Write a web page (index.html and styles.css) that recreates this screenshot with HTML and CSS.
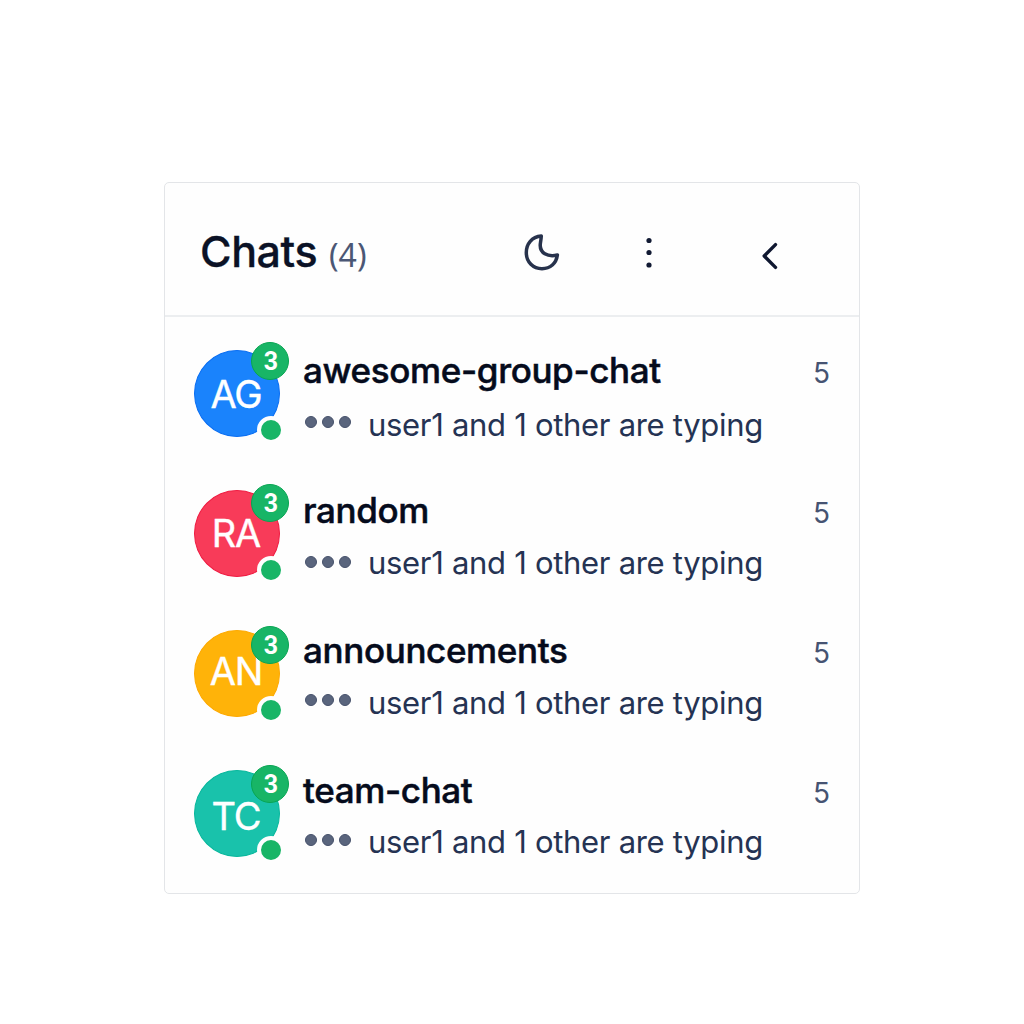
FILE: index.html
```html
<!DOCTYPE html>
<html lang="en">
<head>
<meta charset="utf-8">
<title>Chats</title>
<link rel="stylesheet" href="styles.css">
</head>
<body>
<main class="panel">
  <header class="header">
    <h1 class="title">Chats</h1>
    <span class="total">(4)</span>
    <svg class="icon moon" width="40" height="42" viewBox="0 0 40 42"><path d="M19.300 4C9.800 4.800 4.300 11.800 4.300 20.600C4.300 30.300 11.300 36.700 20 36.700C28.300 36.700 34.200 31.500 35.400 23C26.500 25 16.500 22 18.500 10.500C18.900 8 19.200 6 19.300 4Z"/></svg>
    <svg class="icon dots" width="10" height="36" viewBox="0 0 10 36"><circle cx="5" cy="5.500" r="2.600"/><circle cx="5" cy="17.500" r="2.600"/><circle cx="5" cy="30" r="2.600"/></svg>
    <svg class="icon back" width="20" height="32" viewBox="0 0 20 32"><path d="M15.500 4.600L4.200 16L15.500 27.400"/></svg>
  </header>
  <ul class="list">
    <li class="chat chat-ag">
      <div class="avatar"><span class="initials">AG</span><span class="badge">3</span><span class="online"></span></div>
      <div class="body"><h2 class="name">awesome-group-chat</h2><p class="status"><span class="typing"><i></i><i></i><i></i></span><span class="text">user1 and 1 other are typing</span></p></div>
      <span class="count">5</span>
    </li>
    <li class="chat chat-ra">
      <div class="avatar"><span class="initials">RA</span><span class="badge">3</span><span class="online"></span></div>
      <div class="body"><h2 class="name">random</h2><p class="status"><span class="typing"><i></i><i></i><i></i></span><span class="text">user1 and 1 other are typing</span></p></div>
      <span class="count">5</span>
    </li>
    <li class="chat chat-an">
      <div class="avatar"><span class="initials">AN</span><span class="badge">3</span><span class="online"></span></div>
      <div class="body"><h2 class="name">announcements</h2><p class="status"><span class="typing"><i></i><i></i><i></i></span><span class="text">user1 and 1 other are typing</span></p></div>
      <span class="count">5</span>
    </li>
    <li class="chat chat-tc">
      <div class="avatar"><span class="initials">TC</span><span class="badge">3</span><span class="online"></span></div>
      <div class="body"><h2 class="name">team-chat</h2><p class="status"><span class="typing"><i></i><i></i><i></i></span><span class="text">user1 and 1 other are typing</span></p></div>
      <span class="count">5</span>
    </li>
  </ul>
</main>
</body>
</html>
```
FILE: styles.css
```css
* { box-sizing: border-box; margin: 0; padding: 0; }
body { background: #fff; font-family: Inter, "Liberation Sans", sans-serif; }
.panel {
  width: 696px;
  height: 712px;
  margin: 182px 0 0 164px;
  border: 1px solid #e3e5e8;
  border-radius: 5px;
  background: #fefefe;
}
.header {
  display: flex;
  align-items: flex-start;
  height: 134px;
  padding-left: 35px;
  border-bottom: 2px solid #eceef0;
}
.title {
  width: 118px;
  margin-top: 41px;
  font-size: 43px;
  font-weight: 500;
  -webkit-text-stroke: 0.3px #0b1226;
  line-height: 54px;
  letter-spacing: -0.4px;
  color: #0b1226;
  white-space: nowrap;
}
.total {
  width: 50px;
  margin: 47px 0 0 11px;
  font-family: "Noto Sans", sans-serif;
  font-size: 32px;
  line-height: 50px;
  color: #4b5775;
}
.icon { flex: none; fill: none; stroke-linecap: round; stroke-linejoin: round; }
.moon { margin: 49px 0 0 143px; stroke: #27324c; stroke-width: 3.5; }
.dots { margin: 52px 0 0 82px; fill: #111a33; }
.back { margin: 57px 0 0 106px; stroke: #0f1730; stroke-width: 3.4; }
.list { padding-top: 33px; list-style: none; }
.chat { display: flex; align-items: flex-start; height: 140px; padding: 0 29px; }
.avatar {
  position: relative;
  flex: none;
  width: 86px;
  height: 87px;
  border: 1px solid var(--edge);
  border-radius: 50%;
  background: var(--fill);
  color: #fff;
  text-align: center;
}
.initials {
  display: block;
  padding: var(--initials-top) 2px 0 0;
  font-size: 38px;
  -webkit-text-stroke: 0.4px #fff;
  line-height: 44px;
  letter-spacing: -1.2px;
}
.badge {
  position: absolute;
  top: var(--badge-top);
  right: -10px;
  width: 38px;
  height: 38px;
  padding-left: 2px;
  border: 1px solid #08a552;
  border-radius: 50%;
  background: #18b566;
  font-family: Roboto, sans-serif;
  font-size: 25px;
  font-weight: 700;
  line-height: 37px;
}
.online {
  position: absolute;
  right: -6px;
  bottom: -8px;
  width: 28px;
  height: 28px;
  border: 4px solid #fefefe;
  border-radius: 50%;
  background: #18b566;
}
.body { flex: 1; padding-left: 23px; }
.name {
  font-size: 35px;
  font-weight: 500;
  -webkit-text-stroke: 0.5px #050b1c;
  line-height: 40px;
  letter-spacing: -0.36px;
  color: #050b1c;
  white-space: nowrap;
}
.status { display: flex; gap: 17px; margin-top: var(--status-gap); }
.typing { display: flex; gap: 5px; padding: var(--dots-top) 0 0 2px; }
.typing i { width: 12px; height: 12px; border: 1px solid #46516b; border-radius: 50%; background: #5a657d; }
.text { font-size: 31px; line-height: 40px; letter-spacing: -0.3px; color: #253353; white-space: nowrap; }
.count { padding-top: 3px; font-size: 28px; line-height: 40px; color: #465372; }
.chat-ag { --fill: #1a83fc; --edge: #0a6ef2; --initials-top: 21px; --badge-top: -9px; --status-gap: 15px; --dots-top: 11px; }
.chat-ra { --fill: #f83b59; --edge: #ef1c42; --initials-top: 20px; --badge-top: -7px; --status-gap: 13px; --dots-top: 13px; }
.chat-an { --fill: #ffb309; --edge: #fda900; --initials-top: 18px; --badge-top: -5px; --status-gap: 13px; --dots-top: 11px; }
.chat-tc { --fill: #19c2ab; --edge: #08b79c; --initials-top: 23px; --badge-top: -6px; --status-gap: 12px; --dots-top: 12px; }
```
